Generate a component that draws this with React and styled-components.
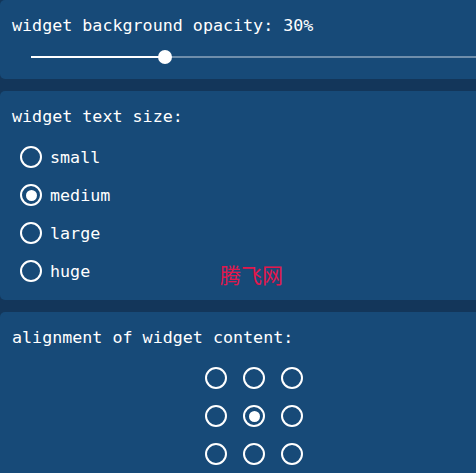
import React from "react";
import styled, { createGlobalStyle } from "styled-components";

const GlobalStyle = createGlobalStyle`
    html, body {
        margin: 0;
        padding: 0;
        background-color: #13365a;
        overflow: hidden;
    }
`;

const textSizes = ["small", "medium", "large", "huge"];

export default function App() {
    const [opacity, setOpacity] = React.useState(30);
    const [textSize, setTextSize] = React.useState("medium");
    const [alignment, setAlignment] = React.useState(4);

    return (
        <Page>
            <GlobalStyle />
            <Card $bottom={15}>
                <Title>widget background opacity: {opacity}%</Title>
                <Slider>
                    <Track>
                        <Fill style={{ width: `${opacity}%` }} />
                        <Thumb style={{ left: `${opacity}%` }} />
                    </Track>
                </Slider>
            </Card>

            <Card $bottom={10}>
                <Title>widget text size:</Title>
                <RadioList>
                    {textSizes.map(size => (
                        <RadioRow key={size} onClick={() => setTextSize(size)}>
                            <Radio $checked={textSize === size} />
                            <Label>{size}</Label>
                        </RadioRow>
                    ))}
                </RadioList>
            </Card>

            <Card $bottom={20}>
                <Title>alignment of widget content:</Title>
                <AlignGrid>
                    {Array.from({ length: 9 }).map((_, i) => (
                        <Radio key={i} $checked={alignment === i} onClick={() => setAlignment(i)} />
                    ))}
                </AlignGrid>
            </Card>

            <Watermark>腾飞网</Watermark>
        </Page>
    );
}

const Page = styled.div`
    position: relative;
    width: 508px;
    display: flex;
    flex-direction: column;
    gap: 12px;
    font-family: "DejaVu Sans Mono", "Liberation Mono", monospace;
    color: #ffffff;
`;

const Card = styled.div`
    background-color: #174a78;
    border-radius: 5px;
    padding: 13px 12px ${p => p.$bottom}px 12px;
`;

const Title = styled.div`
    font-size: 16.7px;
    line-height: 24px;
    height: 24px;
    white-space: nowrap;
`;

const Slider = styled.div`
    margin: 13px 18px 0 19px;
    height: 14px;
    display: flex;
    align-items: center;
`;

const Track = styled.div`
    position: relative;
    flex: 1;
    height: 2px;
    background-color: rgba(255, 255, 255, 0.38);
`;

const Fill = styled.div`
    height: 100%;
    background-color: #ffffff;
`;

const Thumb = styled.div`
    position: absolute;
    top: 50%;
    width: 14px;
    height: 14px;
    border-radius: 50%;
    background-color: #ffffff;
    transform: translate(-50%, -50%);
`;

const RadioList = styled.div`
    margin-top: 10px;
    display: flex;
    flex-direction: column;
`;

const RadioRow = styled.div`
    height: 38px;
    display: flex;
    align-items: center;
    gap: 8px;
    padding-left: 8px;
    cursor: pointer;
`;

const Radio = styled.div`
    box-sizing: border-box;
    width: 22px;
    height: 22px;
    border: 2.5px solid #ffffff;
    border-radius: 50%;
    display: flex;
    align-items: center;
    justify-content: center;
    cursor: pointer;
    &::after {
        content: "";
        display: ${p => (p.$checked ? "block" : "none")};
        width: 11px;
        height: 11px;
        border-radius: 50%;
        background-color: #ffffff;
    }
`;

const Label = styled.span`
    font-size: 16.7px;
    line-height: 20px;
`;

const AlignGrid = styled.div`
    margin-top: 18px;
    display: grid;
    grid-template-columns: repeat(3, 22px);
    grid-auto-rows: 22px;
    gap: 16px;
    justify-content: center;
`;

const Watermark = styled.div`
    position: absolute;
    left: 220px;
    top: 259px;
    font-family: "Noto Sans CJK SC", sans-serif;
    font-size: 21px;
    color: #e3174c;
    pointer-events: none;
`;
